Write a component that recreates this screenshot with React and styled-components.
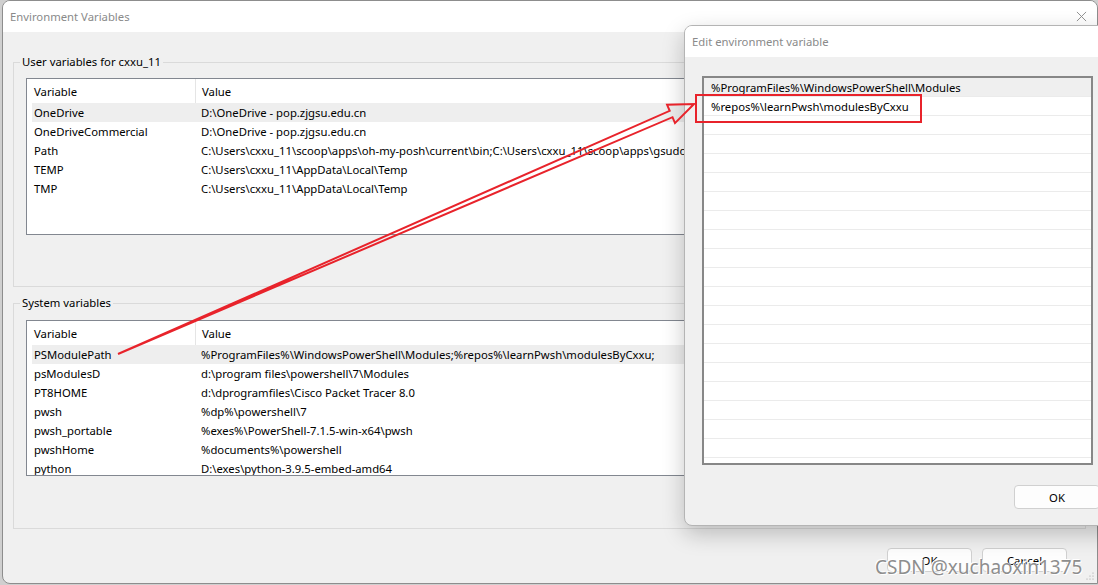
import React from 'react'
import styled, { createGlobalStyle } from 'styled-components'

const userVars = [
  ['OneDrive', 'D:\\OneDrive - pop.zjgsu.edu.cn'],
  ['OneDriveCommercial', 'D:\\OneDrive - pop.zjgsu.edu.cn'],
  ['Path', 'C:\\Users\\cxxu_11\\scoop\\apps\\oh-my-posh\\current\\bin;C:\\Users\\cxxu_11\\scoop\\apps\\gsudo\\current;C:\\Users\\cxxu_11\\scoop\\shims'],
  ['TEMP', 'C:\\Users\\cxxu_11\\AppData\\Local\\Temp'],
  ['TMP', 'C:\\Users\\cxxu_11\\AppData\\Local\\Temp']
]

const systemVars = [
  ['PSModulePath', '%ProgramFiles%\\WindowsPowerShell\\Modules;%repos%\\learnPwsh\\modulesByCxxu;'],
  ['psModulesD', 'd:\\program files\\powershell\\7\\Modules'],
  ['PT8HOME', 'd:\\dprogramfiles\\Cisco Packet Tracer 8.0'],
  ['pwsh', '%dp%\\powershell\\7'],
  ['pwsh_portable', '%exes%\\PowerShell-7.1.5-win-x64\\pwsh'],
  ['pwshHome', '%documents%\\powershell'],
  ['python', 'D:\\exes\\python-3.9.5-embed-amd64']
]

const editValues = [
  '%ProgramFiles%\\WindowsPowerShell\\Modules',
  '%repos%\\learnPwsh\\modulesByCxxu'
]

export default function App () {
  const editRows = [...editValues, ...Array(19).fill('')]

  return (
    <Desktop>
      <GlobalStyle />

      <Window>
        <TitleBar>
          <TitleText>Environment Variables</TitleText>
          <CloseIcon viewBox='0 0 12 12'>
            <path d='M1 1 L11 11 M11 1 L1 11' />
          </CloseIcon>
        </TitleBar>

        <WindowBody>
          <GroupBox $top={8} $bottom={51}>
            <Legend>User variables for cxxu_11</Legend>
            <VarList rows={userVars} height={155} />
          </GroupBox>

          <GroupBox $top={9} $bottom={52}>
            <Legend>System variables</Legend>
            <VarList rows={systemVars} height={154} />
          </GroupBox>

          <Footer>
            <Button>OK</Button>
            <Button>Cancel</Button>
          </Footer>
        </WindowBody>

        <Grip viewBox='0 0 8 8'>
          <circle cx='7' cy='1' r='0.6' />
          <circle cx='7' cy='4' r='0.6' />
          <circle cx='4' cy='4' r='0.6' />
          <circle cx='7' cy='7' r='0.6' />
          <circle cx='4' cy='7' r='0.6' />
          <circle cx='1' cy='7' r='0.6' />
        </Grip>
      </Window>

      <Dialog>
        <DialogTitle>Edit environment variable</DialogTitle>
        <DialogBody>
          <EditList>
            {editRows.map((v, i) => (
              <EditRow key={i} $selected={i === 0}>{v}</EditRow>
            ))}
          </EditList>
          <DialogFooter>
            <Button $w={86}>OK</Button>
            <Button $w={86}>Cancel</Button>
          </DialogFooter>
        </DialogBody>
      </Dialog>

      <Annotation viewBox='0 0 1098 585'>
        <polygon points='118,354 672.5,117.2 675,123.1 694,104 667.1,104.8 669.7,110.8' />
        <rect x='696' y='95' width='225' height='27' />
      </Annotation>

      <Watermark>CSDN @xuchaoxin1375</Watermark>
    </Desktop>
  )
}

function VarList ({ rows, height }) {
  return (
    <ListView style={{ height }}>
      <HeaderRow>
        <HeaderCell $first>Variable</HeaderCell>
        <HeaderCell>Value</HeaderCell>
      </HeaderRow>
      {rows.map(([name, value], i) => (
        <Row key={name} $selected={i === 0}>
          <Cell $pad={2}>{name}</Cell>
          <Cell $pad={6}>{value}</Cell>
        </Row>
      ))}
    </ListView>
  )
}

const GlobalStyle = createGlobalStyle`
  html, body {
    margin: 0;
    padding: 0;
  }
  body {
    width: 1098px;
    height: 585px;
    overflow: hidden;
    background: #cfcfcf;
    font-family: "Noto Sans", "Segoe UI", sans-serif;
    font-size: 11.3px;
    color: #000;
  }
`

const Desktop = styled.div`
  position: relative;
  width: 1098px;
  height: 585px;
  padding-left: 2px;
  box-sizing: border-box;
  overflow: hidden;
`

const Window = styled.div`
  position: relative;
  width: 1096px;
  height: 584px;
  box-sizing: border-box;
  border: 1px solid #8d8d8d;
  border-radius: 8px 8px 0 8px;
  background: #f0f0f0;
  display: flex;
  flex-direction: column;
  overflow: hidden;
`

const TitleBar = styled.div`
  height: 31px;
  flex: none;
  background: #fff;
  display: flex;
  align-items: center;
  justify-content: space-between;
  padding: 0 10px 0 7px;
`

const TitleText = styled.span`
  color: #8a8a8a;
`

const CloseIcon = styled.svg`
  width: 11px;
  height: 11px;
  fill: none;
  stroke: #8a8a8a;
  stroke-width: 1;
`

const WindowBody = styled.div`
  flex: 1;
  display: flex;
  flex-direction: column;
  padding: 22px 11px 0 10px;
`

const GroupBox = styled.fieldset`
  margin: 0;
  padding: ${p => p.$top}px 12px ${p => p.$bottom}px 12px;
  border: 1px solid #dadada;
  min-width: 0;

  & + & {
    margin-top: 8px;
  }
`

const Legend = styled.legend`
  margin-left: -6px;
  padding: 0 2px;
  line-height: 16px;
`

const ListView = styled.div`
  background: #fff;
  border: 1px solid #828790;
  overflow: hidden;
`

const HeaderRow = styled.div`
  display: grid;
  grid-template-columns: 169px 1fr;
  height: 24px;
  align-items: stretch;
`

const HeaderCell = styled.div`
  display: flex;
  align-items: center;
  padding-left: ${p => (p.$first ? 7 : 6)}px;
  border-right: ${p => (p.$first ? '1px solid #e5e5e5' : 'none')};
`

const Row = styled.div`
  display: grid;
  grid-template-columns: 163px 1fr;
  margin-left: 5px;
  height: 19px;
  line-height: 19px;
  background: ${p => (p.$selected ? '#eeeeee' : 'transparent')};
`

const Cell = styled.div`
  padding-left: ${p => p.$pad}px;
  white-space: nowrap;
  overflow: hidden;
`

const Footer = styled.div`
  display: flex;
  justify-content: flex-end;
  gap: 10px;
  padding: 19px 19px 0 0;
`

const Button = styled.button`
  width: ${p => p.$w || 85}px;
  height: 24px;
  box-sizing: border-box;
  border: 1px solid #d0d0d0;
  border-radius: 4px;
  background: #fdfdfd;
  font-family: inherit;
  font-size: 11.3px;
  color: #000;
  padding: 0;
`

const Grip = styled.svg`
  position: absolute;
  right: 3px;
  bottom: 3px;
  width: 8px;
  height: 8px;
  fill: #9a9a9a;
`

const Dialog = styled.div`
  position: absolute;
  left: 684px;
  top: 25px;
  width: 525px;
  height: 501px;
  box-sizing: border-box;
  border: 1px solid #b4b4b4;
  border-radius: 8px;
  background: #f0f0f0;
  box-shadow: 0 8px 22px rgba(0, 0, 0, 0.22);
  display: flex;
  flex-direction: column;
  overflow: hidden;
  z-index: 2;
`

const DialogTitle = styled.div`
  height: 31px;
  flex: none;
  background: #fff;
  display: flex;
  align-items: center;
  padding-left: 7px;
  color: #8a8a8a;
`

const DialogBody = styled.div`
  flex: 1;
  padding: 19px 0 0 17px;
  display: flex;
  flex-direction: column;
`

const EditList = styled.div`
  width: 391px;
  height: 389px;
  box-sizing: border-box;
  border: 2px solid #878787;
  background: #fff;
  overflow: hidden;
`

const EditRow = styled.div`
  height: 19px;
  box-sizing: border-box;
  line-height: 19px;
  padding-left: 7px;
  border-bottom: 1px solid #ebebeb;
  background: ${p => (p.$selected ? '#efefef' : '#fff')};
  white-space: nowrap;
`

const DialogFooter = styled.div`
  display: flex;
  justify-content: flex-end;
  gap: 9px;
  padding: 20px 13px 0 0;
`

const Annotation = styled.svg`
  position: absolute;
  left: 0;
  top: 0;
  width: 1098px;
  height: 585px;
  pointer-events: none;
  z-index: 3;
  fill: none;
  stroke: #e8232b;
  stroke-width: 2;
`

const Watermark = styled.div`
  position: absolute;
  left: 875px;
  top: 554px;
  z-index: 4;
  font-family: "Noto Sans", sans-serif;
  font-size: 19px;
  line-height: 26px;
  color: #8e8e8e;
  text-shadow: 0 0 1px #fff, 1px 1px 0 #fff, -1px -1px 0 #fff;
  pointer-events: none;
`
